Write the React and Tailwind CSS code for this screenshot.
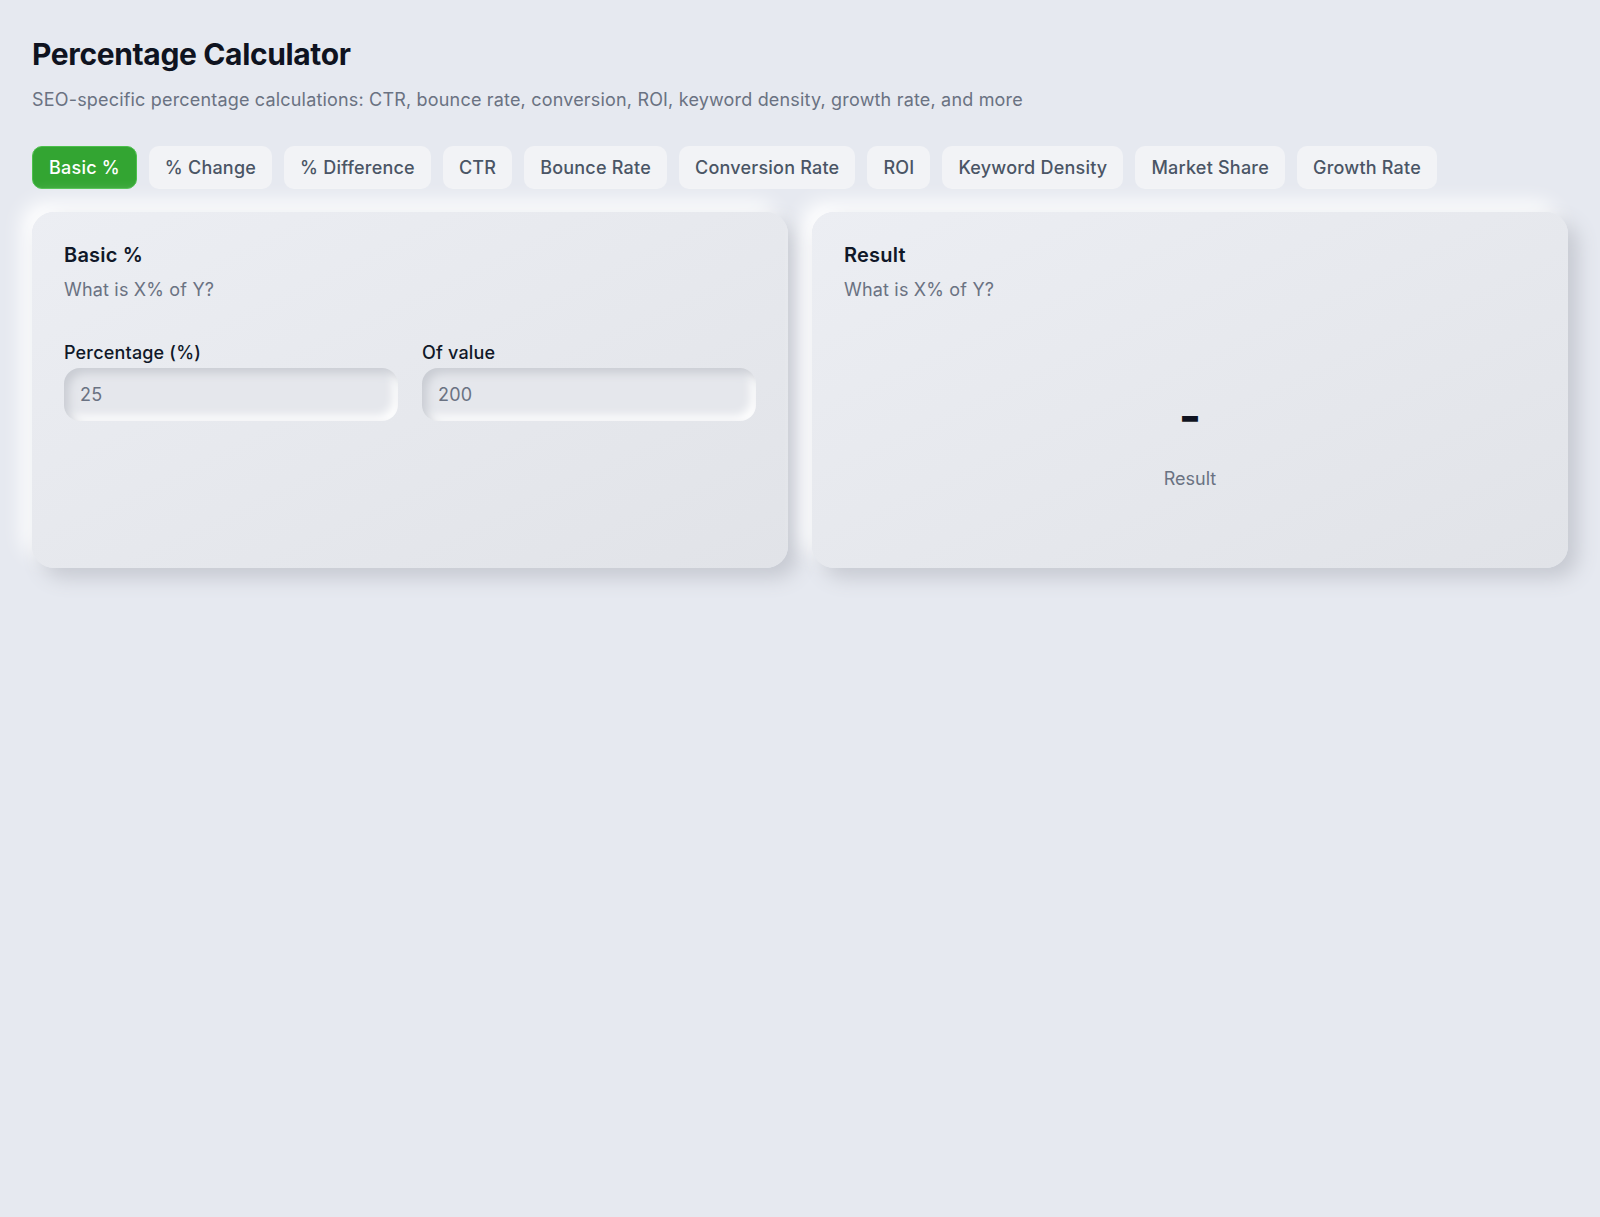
import { useState } from "react";

const tabs = [
  "Basic %",
  "% Change",
  "% Difference",
  "CTR",
  "Bounce Rate",
  "Conversion Rate",
  "ROI",
  "Keyword Density",
  "Market Share",
  "Growth Rate",
];

function Field({ label, placeholder, value, onChange }) {
  return (
    <label className="flex flex-col">
      <span className="text-lg font-medium leading-6 tracking-[0.01em] text-gray-900 mb-[3px]">{label}</span>
      <input
        type="text"
        value={value}
        placeholder={placeholder}
        onChange={(e) => onChange(e.target.value)}
        className="h-[53px] w-full rounded-2xl bg-[#e5e7ec] px-4 text-lg tracking-[0.01em] text-gray-700 placeholder:text-gray-500 outline-none shadow-[inset_5px_5px_10px_#c9ccd3,inset_-5px_-5px_10px_#ffffff]"
      />
    </label>
  );
}

function Card({ children }) {
  return (
    <div className="rounded-[22px] bg-gradient-to-br from-[#eceef3] to-[#e1e3e8] px-8 pt-[29px] pb-8 shadow-[10px_10px_20px_#c6c9d1,-10px_-10px_20px_#ffffff]">
      {children}
    </div>
  );
}

export default function App() {
  const [active, setActive] = useState(0);
  const [pct, setPct] = useState("");
  const [of, setOf] = useState("");

  return (
    <div
      className="min-h-screen bg-[#e6e9f0] px-8 pt-[36px]"
      style={{ fontFamily: "Inter, 'Noto Sans', sans-serif" }}
    >
      <h1 className="text-3xl font-bold tracking-[-0.012em] text-[#0f1320] leading-9">
        Percentage Calculator
      </h1>
      <p className="mt-[14px] text-lg leading-7 tracking-[0.01em] text-gray-500">
        SEO-specific percentage calculations: CTR, bounce rate, conversion, ROI, keyword density, growth rate, and more
      </p>

      <div className="mt-[32px] flex flex-wrap gap-3">
        {tabs.map((t, i) => (
          <button
            key={t}
            onClick={() => setActive(i)}
            className={
              i === active
                ? "h-[43px] rounded-[10px] border border-[#4cc04c] bg-[#33a532] px-4 text-lg font-medium tracking-[0.012em] text-white"
                : "h-[43px] rounded-[10px] bg-[#f2f3f6] px-4 text-lg font-medium tracking-[0.012em] text-gray-600"
            }
          >
            {t}
          </button>
        ))}
      </div>

      <div className="mt-[23px] grid grid-cols-2 gap-6">
        <Card>
          <h2 className="text-xl font-semibold leading-7 tracking-[0.01em] text-gray-900">Basic %</h2>
          <p className="mt-[7px] text-lg leading-7 tracking-[0.01em] text-gray-500">What is X% of Y?</p>
          <div className="mt-[37px] grid grid-cols-2 gap-6">
            <Field label="Percentage (%)" placeholder="25" value={pct} onChange={setPct} />
            <Field label="Of value" placeholder="200" value={of} onChange={setOf} />
          </div>
        </Card>
        <Card>
          <h2 className="text-xl font-semibold leading-7 tracking-[0.01em] text-gray-900">Result</h2>
          <p className="mt-[7px] text-lg leading-7 tracking-[0.01em] text-gray-500">What is X% of Y?</p>
          <div className="mt-[88px] mb-[43px] flex flex-col items-center">
            <div className="text-5xl font-bold leading-[48px] text-[#0f1320]">-</div>
            <div className="mt-[25px] text-lg leading-7 text-gray-500">Result</div>
          </div>
        </Card>
      </div>
    </div>
  );
}
